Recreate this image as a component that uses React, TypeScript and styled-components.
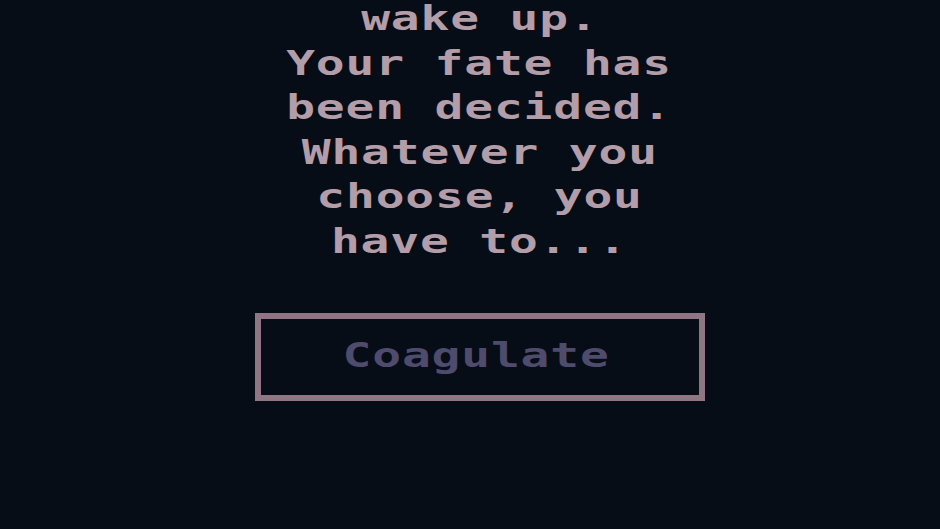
import styled, { createGlobalStyle } from "styled-components";

const lines = [
  "wake up.",
  "Your fate has",
  "been decided.",
  "Whatever you",
  "choose, you",
  "have to...",
];

export default function App() {
  return (
    <>
      <GlobalStyle />
      <Screen>
        <Story>
          {lines.map((l) => (
            <StoryLine key={l}>{l}</StoryLine>
          ))}
        </Story>
        <ChoiceButton>
          <ChoiceLabel>Coagulate</ChoiceLabel>
        </ChoiceButton>
      </Screen>
    </>
  );
}

const GlobalStyle = createGlobalStyle`
  html, body {
    margin: 0;
    padding: 0;
    background: #060d17;
  }
  body {
    font-family: "DejaVu Sans Mono", "Liberation Mono", monospace;
  }
`;

export const Screen = styled.div`
  width: 940px;
  height: 529px;
  overflow: hidden;
  box-sizing: border-box;
  padding-left: 19px;
  display: flex;
  flex-direction: column;
  align-items: center;
`;

export const Story = styled.div`
  margin-top: -3px;
  display: flex;
  flex-direction: column;
  align-items: center;
`;

export const StoryLine = styled.div`
  font-size: 33px;
  font-weight: bold;
  line-height: 44.6px;
  letter-spacing: 0.6px;
  color: #b39da8;
  white-space: pre;
  transform: scaleX(1.45);
`;

export const ChoiceButton = styled.div`
  margin-top: 48px;
  width: 450px;
  height: 88px;
  box-sizing: border-box;
  border: 6px solid #8e7783;
  display: flex;
  align-items: center;
  justify-content: center;
`;

export const ChoiceLabel = styled.span`
  font-size: 33px;
  font-weight: bold;
  letter-spacing: 0.6px;
  color: #4f4b6d;
  transform: scaleX(1.45);
  margin-top: -2px;
  margin-right: 6px;
`;
